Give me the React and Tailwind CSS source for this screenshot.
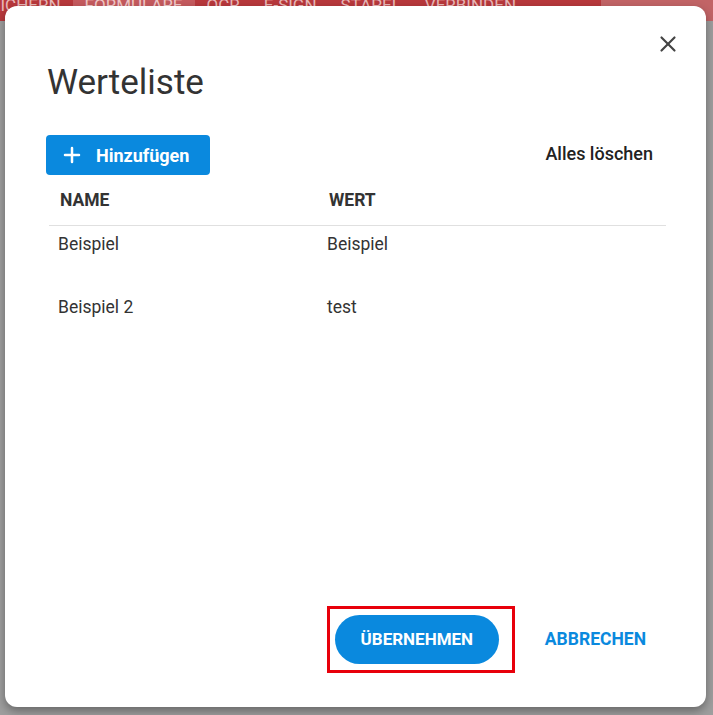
import { X, Plus } from 'lucide-react'

const tabs = ['SPEICHERN', 'FORMULARE', 'OCR', 'E-SIGN', 'STAPEL', 'VERBINDEN']

const rows = [
  { name: 'Beispiel', value: 'Beispiel' },
  { name: 'Beispiel 2', value: 'test' },
]

const App = () => {
  return (
    <div className="relative h-[715px] w-[713px] overflow-hidden bg-[#a3a3a3] font-['Roboto','Liberation_Sans',sans-serif]">
      {/* App behind the dialog */}
      <div className="flex h-[30px] items-center bg-[#b8383c] -translate-y-[9px]">
        <div className="flex h-full items-center -ml-[42px]">
          {tabs.map((tab) => (
            <div
              key={tab}
              className={
                tab === 'FORMULARE'
                  ? 'flex h-full items-center bg-[#c55a5e] px-3 text-[17px] text-[#f0c8c8]'
                  : 'flex h-full items-center px-3 text-[17px] text-[#e8b9b9]'
              }
            >
              {tab}
            </div>
          ))}
        </div>
        <div className="ml-auto h-full w-[112px] bg-[#c26466]" />
      </div>
      <div className="absolute inset-0 top-[21px] bg-[#9e9e9e]" />

      {/* Dialog */}
      <div className="absolute left-[5px] top-[6px] flex h-[701px] w-[701px] flex-col rounded-[12px] bg-white shadow-[0_4px_10px_rgba(0,0,0,0.35)]">
        <button className="absolute right-[25px] top-[25px] text-[#444]">
          <X className="h-[26px] w-[26px]" strokeWidth={2} />
        </button>

        <h2 className="ml-[42px] mt-[57px] text-[35px] leading-[40px] font-normal text-[#333]">Werteliste</h2>

        <div className="mt-[32px] flex items-center justify-between pl-[41px] pr-[53px]">
          <button className="flex h-[40px] items-center gap-[12px] rounded-[4px] bg-[#0a89de] pl-[14px] pr-[21px] text-[18px] font-bold text-white">
            <Plus className="h-[24px] w-[24px]" strokeWidth={2.5} />
            Hinzufügen
          </button>
          <button className="-mt-[3px] text-[18px] font-medium text-[#222]">Alles löschen</button>
        </div>

        <div className="ml-[44px] mr-[40px]">
          <div className="flex h-[51px] items-center border-b border-[#e0e0e0] pt-[1px] text-[17.5px] font-bold text-[#333]">
            <div className="w-[280px] pl-[11px]">NAME</div>
            <div>WERT</div>
          </div>
          {rows.map((row) => (
            <div key={row.name} className="flex h-[63px] pt-[5px] text-[17.5px] text-[#333]">
              <div className="w-[280px] pl-[9px]">{row.name}</div>
              <div className="-ml-[2px]">{row.value}</div>
            </div>
          ))}
        </div>

        <div className="mt-auto mb-[34px] flex items-center justify-end gap-[30px] pr-[60px]">
          <div className="border-[3px] border-[#e8000b] pl-[5px] pr-[13px] py-[6px]">
            <button className="h-[49px] w-[164px] rounded-full bg-[#0a89de] text-[17px] font-bold text-white">
              ÜBERNEHMEN
            </button>
          </div>
          <button className="text-[17.5px] font-bold text-[#0a89de]">ABBRECHEN</button>
        </div>
      </div>
    </div>
  )
}

export default App
